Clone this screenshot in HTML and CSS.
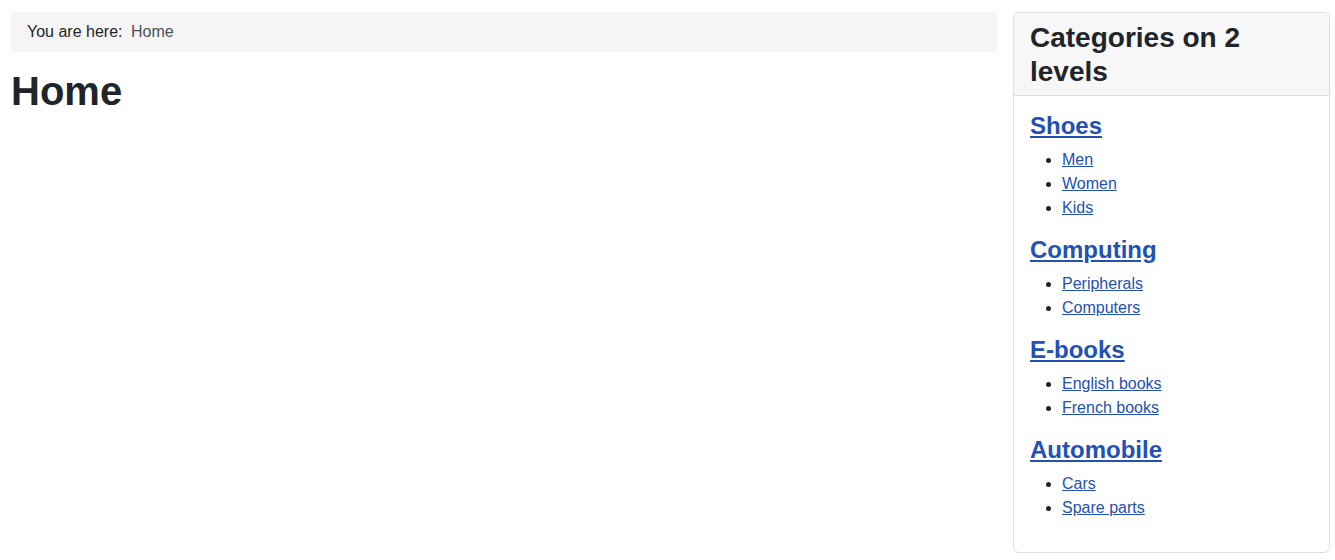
FILE: index.html
```html
<!DOCTYPE html>
<html lang="en">
<head>
    <meta charset="UTF-8">
    <meta name="viewport" content="width=device-width, initial-scale=1.0">
    <title>Home</title>
    <link rel="stylesheet" href="styles.css">
</head>
<body>
    <div class="page">
        <main class="main">
            <nav class="breadcrumb">
                <span class="breadcrumb-label">You are here:</span>
                <span class="breadcrumb-item">Home</span>
            </nav>
            <h1>Home</h1>
        </main>
        <aside class="card">
            <div class="card-header">
                <h3>Categories on 2 levels</h3>
            </div>
            <div class="card-body">
                <h4><a href="#">Shoes</a></h4>
                <ul>
                    <li><a href="#">Men</a></li>
                    <li><a href="#">Women</a></li>
                    <li><a href="#">Kids</a></li>
                </ul>
                <h4><a href="#">Computing</a></h4>
                <ul>
                    <li><a href="#">Peripherals</a></li>
                    <li><a href="#">Computers</a></li>
                </ul>
                <h4><a href="#">E-books</a></h4>
                <ul>
                    <li><a href="#">English books</a></li>
                    <li><a href="#">French books</a></li>
                </ul>
                <h4><a href="#">Automobile</a></h4>
                <ul>
                    <li><a href="#">Cars</a></li>
                    <li><a href="#">Spare parts</a></li>
                </ul>
            </div>
        </aside>
    </div>
</body>
</html>
```

FILE: styles.css
```css
body {
    font-family: "Liberation Sans", Arial, sans-serif;
    font-size: 16px;
    line-height: 1.5;
    color: #212529;
    background: #fff;
    margin: 0;
}
.page {
    display: flex;
    align-items: flex-start;
    gap: 16px;
    padding: 12px 5px 0 11px;
}
.main {
    flex: 1;
}
.breadcrumb {
    background: #f5f5f5;
    padding: 8px 16px;
    margin-bottom: 15px;
}
.breadcrumb-label {
    margin-right: 4px;
}
.breadcrumb-item {
    color: #495057;
}
h1 {
    font-size: 40px;
    font-weight: 700;
    line-height: 1.2;
    margin: 0;
}
.card {
    width: 315px;
    border: 1px solid #dfdfdf;
    border-radius: 6px;
    overflow: hidden;
}
.card-header {
    background: #f7f7f7;
    border-bottom: 1px solid #dfdfdf;
    padding: 8px 16px 7px;
}
.card-header h3 {
    font-size: 28px;
    font-weight: 700;
    line-height: 1.2;
    margin: 0;
}
.card-body {
    padding: 16px;
}
.card-body h4 {
    font-size: 24px;
    font-weight: 700;
    line-height: 1.2;
    margin: 0 0 7.1px;
}
.card-body ul {
    margin: 0 0 16px;
    padding-left: 32px;
}
a {
    color: #2250b3;
}
```
